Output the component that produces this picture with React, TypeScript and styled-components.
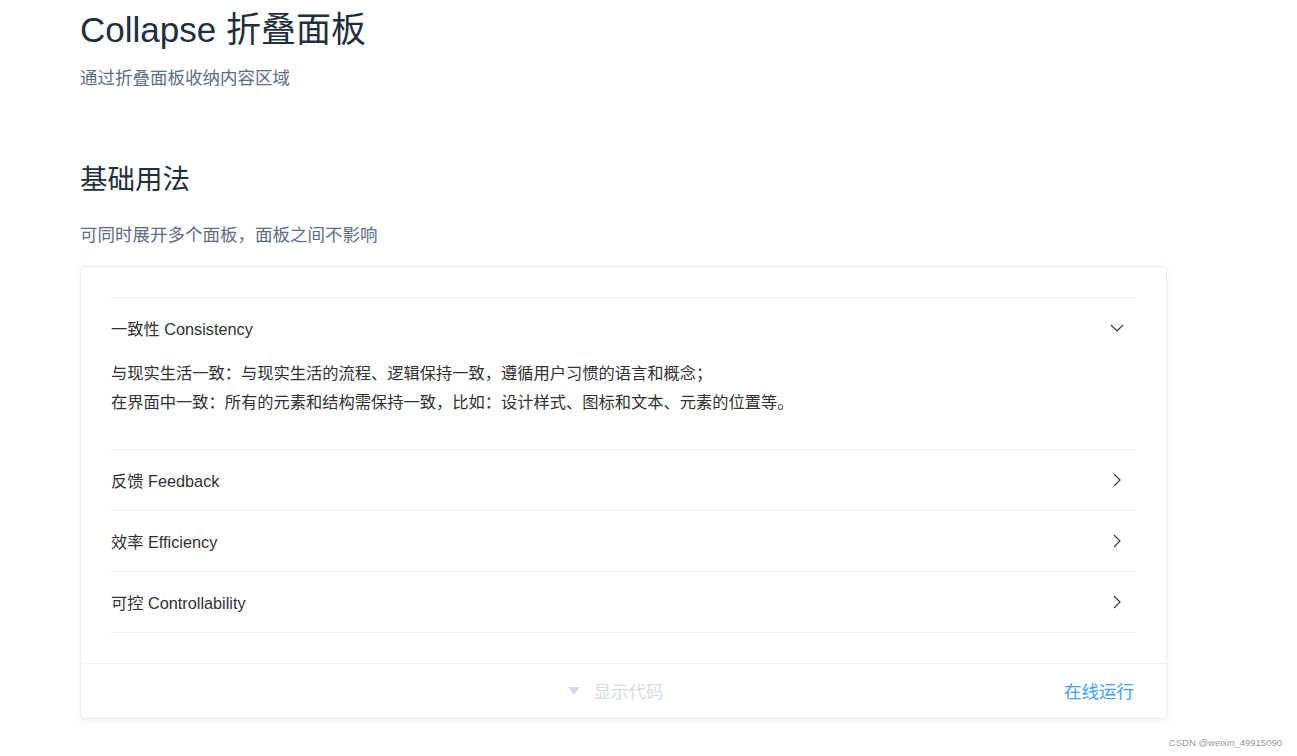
import React, { useState } from 'react';
import styled, { createGlobalStyle } from 'styled-components';

const GlobalStyle = createGlobalStyle`
  html, body {
    margin: 0;
    padding: 0;
    background: #fff;
  }
  body {
    font-family: "Liberation Sans", "Noto Sans CJK SC", sans-serif;
  }
`;

const Page = styled.div`
  padding-left: 80px;
`;

const Title = styled.h1`
  margin: 0;
  font-size: 35px;
  font-weight: 400;
  line-height: 60px;
  color: #1f2f3d;
`;

const Lead = styled.p`
  margin: 4px 0 0;
  font-size: 17.5px;
  line-height: 28px;
  color: #5e6d82;
`;

const SectionTitle = styled.h3`
  margin: 68px 0 0;
  font-size: 27.5px;
  font-weight: 400;
  line-height: 40px;
  color: #1f2f3d;
`;

const SectionDesc = styled.p`
  margin: 22px 0 0;
  font-size: 17.5px;
  line-height: 26px;
  color: #5e6d82;
`;

const DemoBlock = styled.div`
  margin-top: 18px;
  width: 1087px;
  box-sizing: border-box;
  border: 1px solid #ebebeb;
  border-radius: 4px;
  box-shadow: 0 2px 6px rgba(232, 237, 250, 0.8);
`;

const DemoSource = styled.div`
  padding: 30px;
`;

const Collapse = styled.div`
  border-top: 1px solid #ebeef5;
`;

const Item = styled.div``;

const Header = styled.div<{ $active: boolean }>`
  display: flex;
  align-items: center;
  justify-content: space-between;
  height: 60px;
  border-bottom: 1px solid ${(p) => (p.$active ? 'transparent' : '#ebeef5')};
  font-size: 16.25px;
  color: #303133;
  cursor: pointer;
`;

const Arrow = styled.span`
  display: flex;
  align-items: center;
  justify-content: center;
  width: 16px;
  margin-right: 11px;
`;

const Content = styled.div`
  padding-bottom: 32px;
  border-bottom: 1px solid #ebeef5;
  font-size: 16.25px;
  line-height: 28.75px;
  color: #303133;
`;

const Footer = styled.div`
  display: grid;
  grid-template-columns: 1fr auto 1fr;
  align-items: center;
  height: 54px;
  border-top: 1px solid #eaeefb;
`;

const ShowCode = styled.div`
  display: flex;
  align-items: center;
  gap: 14px;
  margin-right: 16px;
  font-size: 17.5px;
  color: #d3dce6;
`;

const RunButton = styled.span`
  justify-self: end;
  margin-right: 32px;
  font-size: 17.5px;
  color: #409eff;
`;

const Watermark = styled.div`
  margin-top: 17px;
  padding-right: 15px;
  text-align: right;
  font-size: 9.5px;
  line-height: 14px;
  color: #999;
`;

const ChevronRight = () => (
  <svg width="8" height="14" viewBox="0 0 8 14" fill="none">
    <path d="M1 1 L7 7 L1 13" stroke="#303133" strokeWidth="1.1" />
  </svg>
);

const ChevronDown = () => (
  <svg width="14" height="8" viewBox="0 0 14 8" fill="none">
    <path d="M1 1 L7 7 L13 1" stroke="#303133" strokeWidth="1.1" />
  </svg>
);

const items = [
  {
    title: '一致性 Consistency',
    lines: [
      '与现实生活一致：与现实生活的流程、逻辑保持一致，遵循用户习惯的语言和概念；',
      '在界面中一致：所有的元素和结构需保持一致，比如：设计样式、图标和文本、元素的位置等。',
    ],
  },
  { title: '反馈 Feedback', lines: [] },
  { title: '效率 Efficiency', lines: [] },
  { title: '可控 Controllability', lines: [] },
];

export default function App() {
  const [open, setOpen] = useState<number[]>([0]);

  const toggle = (i: number) =>
    setOpen((o) => (o.includes(i) ? o.filter((x) => x !== i) : [...o, i]));

  return (
    <>
      <GlobalStyle />
      <Page>
        <Title>Collapse 折叠面板</Title>
        <Lead>通过折叠面板收纳内容区域</Lead>
        <SectionTitle>基础用法</SectionTitle>
        <SectionDesc>可同时展开多个面板，面板之间不影响</SectionDesc>
        <DemoBlock>
          <DemoSource>
            <Collapse>
              {items.map((it, i) => {
                const active = open.includes(i);
                return (
                  <Item key={it.title}>
                    <Header $active={active} onClick={() => toggle(i)}>
                      {it.title}
                      <Arrow>{active ? <ChevronDown /> : <ChevronRight />}</Arrow>
                    </Header>
                    {active && (
                      <Content>
                        {it.lines.map((l) => (
                          <div key={l}>{l}</div>
                        ))}
                      </Content>
                    )}
                  </Item>
                );
              })}
            </Collapse>
          </DemoSource>
          <Footer>
            <span />
            <ShowCode>
              <svg width="12" height="8" viewBox="0 0 12 8">
                <path d="M0 0 H12 L6 8 Z" fill="#d3dce6" />
              </svg>
              显示代码
            </ShowCode>
            <RunButton>在线运行</RunButton>
          </Footer>
        </DemoBlock>
      </Page>
      <Watermark>CSDN @weixin_49915090</Watermark>
    </>
  );
}
